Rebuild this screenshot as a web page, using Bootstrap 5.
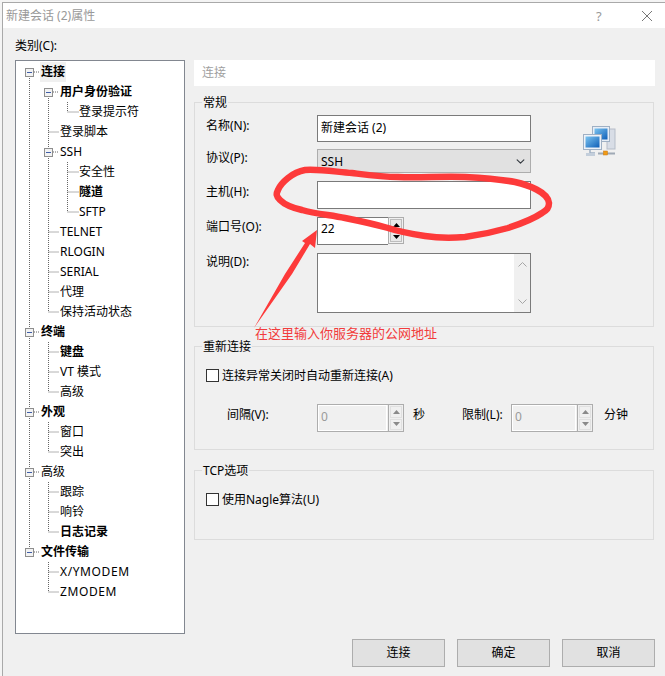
<!doctype html>
<html lang="zh"><head><meta charset="utf-8"><title>新建会话 (2)属性</title>
<link href="https://cdn.jsdelivr.net/npm/bootstrap@5.3.0/dist/css/bootstrap.min.css" rel="stylesheet">
<style>
html,body{height:676px;overflow:hidden;background:#f4f4f4}
body{font:12px/18px "Noto Sans","Noto Sans CJK SC",sans-serif;color:#000}
.wnd{position:relative;margin:2px 0 0 2px;border-top:1px solid #a9a9a9;border-left:1px solid #a9a9a9;background:#f0f0f0;height:674px}
.ttl{height:25px;background:#fff;color:#999;padding-left:3px;padding-right:12px;font-size:12px}
.ttl-q{width:45px;font-size:13px}
.cat-lbl{height:32px;padding:9px 0 0 12px}
.mainrow{padding-left:12px;padding-right:10px}
.tree{position:relative;width:170px;height:574px;margin-right:9px;background:#fff;border:1px solid #828790;padding-top:1px;flex:none}
.tree-lines{position:absolute;left:-1px;top:-1px}
.trow{height:20px;line-height:20px;white-space:nowrap}
.lv0{padding-left:25px}.lv1{padding-left:44px}.lv2{padding-left:63px}
.trow b{font-weight:700}
.wide{letter-spacing:.6px}
.sel{display:inline-block;background:#f0f0f0;padding:0 1px;margin-left:-1px}
.pagehdr{height:26px;background:#fff;color:#a0a0a0;line-height:26px;padding-left:8px;margin-bottom:16px}
.grp{position:relative;border:1px solid #dcdcdc;margin-right:1px}
.grp-lg{position:absolute;left:7px;top:-9px;padding:0 1px;background:#f0f0f0;line-height:18px}
.g1{height:225px;padding:12px 0 0 11px;margin-bottom:19px}
.g2{height:104px;padding:22px 0 0 11px;margin-bottom:20px}
.g3{height:70px;padding:22px 0 0 11px}
.fld-lbl{width:111px;flex:none}
.lb1{padding-top:1px}.lb2{padding-top:2px}
.ctl.form-control,.ctl.form-select{border-radius:0;font:inherit;color:#000;box-shadow:none;padding:0 3px;min-height:0}
.ctl.form-control{border:1px solid #7a7a7a;background:#fff}
.w214{width:214px}
.h27{height:27px;padding-bottom:4px!important}.h24{height:24px}.h28{height:28px}.h60{height:60px}
.mb7{margin-bottom:7px}.mb8{margin-bottom:8px}
.ctl.form-select{border:1px solid #adadad;background-color:#e1e1e1;background-position:right 3px center;background-size:13px 9px;padding-top:2px}
.memo{display:flex;padding:0!important;justify-content:flex-end}
.memo-bar{width:16px;background:#f0f0f0;height:100%}
.spin{width:87px;height:28px}
.spin2{width:82px}
.spin-in.form-control{flex:1 1 0;width:0;height:28px;border-right:0!important;padding-bottom:5px}
.spin-btns{width:16px;height:27px;border:1px solid #adadad;padding:1px;gap:1px;flex:none;background:#f0f0f0}
.spin-b{flex:1;background:#e8e8e8;border:1px solid #bdbdbd;display:flex;align-items:center;justify-content:center}
.dis .spin-in.form-control{border-color:#adadad!important;background:#f0f0f0!important;color:#9a9a9a!important;outline:1px solid #fff;outline-offset:-2px;padding-bottom:3px}
.dis .spin-btns{height:28px}
.dis .spin-b{border-color:#e0e0e0;background:#f0f0f0}
.dis>label,.dis>span{margin-bottom:6px}
.chk.form-check-input{width:13px;height:13px;margin:0 3px 0 0;border:1px solid #333;border-radius:0;flex:none}
.ind0{width:111px;padding-left:21px;flex:none}
.u-sec{width:58px;padding-left:9px;flex:none}
.u-lim{width:49px;flex:none}
.u-min{padding-left:11px}
.pcico{margin:11px 0 0 52px;flex:none}
.foot{margin-top:5px;padding-right:10px;gap:12px}
.wbtn.btn{width:93px;height:28px;padding:0;border:1px solid #adadad;border-radius:0;background:#e1e1e1;color:#000;font:inherit}
.ink{position:absolute;left:-3px;top:-3px;pointer-events:none}
.note{position:absolute;left:252px;top:321px;color:#f23c3c;font-size:13px;line-height:18px;white-space:nowrap}
.h13{height:13px}
.mt22{margin-top:22px}
</style></head>
<body>
<div class="wnd">
  <div class="ttl d-flex align-items-center">
    <span class="flex-grow-1">新建会话 (2)属性</span>
    <span class="ttl-q">?</span>
    <svg width="12" height="12" viewBox="0 0 12 12"><path d="M1 1l10 10M11 1L1 11" stroke="#777" fill="none"/></svg>
  </div>
  <div class="cat-lbl">类别(C):</div>
  <div class="mainrow d-flex">
    <div class="tree">
      <svg class="tree-lines" width="170" height="574" viewBox="0 0 170 574">
        <g stroke="#666" stroke-dasharray="1 1" fill="none">
          <path d="M14.500 18V488M33.500 38V88M33.500 96V252H44M52.500 42V52H64M52.500 102V152H64M33.500 72H44M52.500 112H64M52.500 132H64M33.500 172H44M33.500 192H44M33.500 212H44M33.500 232H44M33.500 282V332H44M33.500 292H44M33.500 312H44M33.500 362V392H44M33.500 372H44M33.500 422V472H44M33.500 432H44M33.500 452H44M33.500 502V532H44M33.500 512H44M19 12H25M19 272H25M19 352H25M19 412H25M19 492H25M38 32H44M38 92H44"/>
        </g>
        <g fill="#f2f2f2" stroke="#8e8e8e">
          <rect x="10.500" y="8.500" width="8" height="8"/><rect x="10.500" y="268.500" width="8" height="8"/><rect x="10.500" y="348.500" width="8" height="8"/><rect x="10.500" y="408.500" width="8" height="8"/><rect x="10.500" y="488.500" width="8" height="8"/>
          <rect x="29.500" y="28.500" width="8" height="8"/><rect x="29.500" y="88.500" width="8" height="8"/>
        </g>
        <path d="M12 12.500h5M12 272.500h5M12 352.500h5M12 412.500h5M12 492.500h5M31 32.500h5M31 92.500h5" stroke="#3f5ea8"/>
      </svg>
      <div class="trow lv0"><b class="sel">连接</b></div>
      <div class="trow lv1"><b>用户身份验证</b></div>
      <div class="trow lv2">登录提示符</div>
      <div class="trow lv1">登录脚本</div>
      <div class="trow lv1">SSH</div>
      <div class="trow lv2">安全性</div>
      <div class="trow lv2"><b>隧道</b></div>
      <div class="trow lv2">SFTP</div>
      <div class="trow lv1">TELNET</div>
      <div class="trow lv1">RLOGIN</div>
      <div class="trow lv1">SERIAL</div>
      <div class="trow lv1">代理</div>
      <div class="trow lv1">保持活动状态</div>
      <div class="trow lv0"><b>终端</b></div>
      <div class="trow lv1"><b>键盘</b></div>
      <div class="trow lv1">VT 模式</div>
      <div class="trow lv1">高级</div>
      <div class="trow lv0"><b>外观</b></div>
      <div class="trow lv1">窗口</div>
      <div class="trow lv1">突出</div>
      <div class="trow lv0">高级</div>
      <div class="trow lv1">跟踪</div>
      <div class="trow lv1">响铃</div>
      <div class="trow lv1"><b>日志记录</b></div>
      <div class="trow lv0"><b>文件传输</b></div>
      <div class="trow lv1 wide">X/YMODEM</div>
      <div class="trow lv1 wide">ZMODEM</div>
    </div>
    <div class="flex-grow-1">
      <div class="pagehdr">连接</div>
      <div class="grp g1 d-flex">
        <span class="grp-lg">常规</span>
        <div>
          <div class="d-flex align-items-start mb7"><label class="fld-lbl lb2">名称(N):</label><input class="form-control ctl w214 h27" value="新建会话 (2)"></div>
          <div class="d-flex align-items-start mb8"><label class="fld-lbl">协议(P):</label><select class="form-select ctl w214 h24"><option>SSH</option></select></div>
          <div class="d-flex align-items-start mb8"><label class="fld-lbl lb2">主机(H):</label><input class="form-control ctl w214 h28"></div>
          <div class="d-flex align-items-start mb8"><label class="fld-lbl lb1">端口号(O):</label>
            <div class="d-flex spin"><input class="form-control ctl spin-in" value="22">
              <div class="spin-btns d-flex flex-column"><div class="spin-b"><svg width="7" height="4" viewBox="0 0 7 4"><path d="M3.500 0L7 4H0z" fill="#000"/></svg></div><div class="spin-b"><svg width="7" height="4" viewBox="0 0 7 4"><path d="M0 0h7L3.500 4z" fill="#000"/></svg></div></div>
            </div>
          </div>
          <div class="d-flex align-items-start"><label class="fld-lbl">说明(D):</label>
            <div class="form-control ctl w214 h60 memo"><div class="memo-bar d-flex flex-column justify-content-between align-items-center py-2"><svg width="9" height="5" viewBox="0 0 9 5"><path d="M.5 4.500l4-4 4 4" stroke="#a6a6a6" fill="none"/></svg><svg width="9" height="5" viewBox="0 0 9 5"><path d="M.5.5l4 4 4-4" stroke="#a6a6a6" fill="none"/></svg></div></div>
          </div>
        </div>
        <svg class="pcico" width="33" height="32" viewBox="0 0 33 32">
          <defs><linearGradient id="scr" x1="0" y1="0" x2="1" y2="1"><stop offset="0" stop-color="#7cc4f0"/><stop offset="1" stop-color="#0f5fb8"/></linearGradient></defs>
          <rect x="24" y="3" width="8" height="20" fill="#d8dde6" stroke="#b5bcc8"/>
          <rect x="9.500" y="0.500" width="17" height="15" fill="#e8eef6" stroke="#9fb0c4"/>
          <rect x="11.500" y="2.500" width="13" height="11" fill="url(#scr)"/>
          <rect x="0.500" y="8.500" width="18" height="15" fill="#eef2f8" stroke="#9fb0c4"/>
          <rect x="2.500" y="10.500" width="14" height="11" fill="url(#scr)"/>
          <path d="M7 24v3h5" stroke="#9fb0c4" fill="none" stroke-width="1.500"/>
          <path d="M3 28.500h9" stroke="#c3cedb" stroke-width="3"/>
          <path d="M15 27.500H32" stroke="#9fa9b5" stroke-width="2"/>
          <rect x="20.500" y="25" width="4" height="4" fill="#f09a16" stroke="#c97a10" stroke-width=".5"/>
        </svg>
      </div>
      <div class="grp g2">
        <span class="grp-lg">重新连接</span>
        <div class="d-flex align-items-center h13"><input class="form-check-input chk" type="checkbox"><label>连接异常关闭时自动重新连接(A)</label></div>
        <div class="d-flex align-items-center dis mt22">
          <label class="ind0">间隔(V):</label>
          <div class="d-flex spin"><input class="form-control ctl spin-in" value="0" disabled>
            <div class="spin-btns d-flex flex-column"><div class="spin-b"><svg width="7" height="4" viewBox="0 0 7 4"><path d="M3.500 0L7 4H0z" fill="#8a8a8a"/></svg></div><div class="spin-b"><svg width="7" height="4" viewBox="0 0 7 4"><path d="M0 0h7L3.500 4z" fill="#8a8a8a"/></svg></div></div>
          </div>
          <span class="u-sec">秒</span>
          <label class="u-lim">限制(L):</label>
          <div class="d-flex spin spin2"><input class="form-control ctl spin-in" value="0" disabled>
            <div class="spin-btns d-flex flex-column"><div class="spin-b"><svg width="7" height="4" viewBox="0 0 7 4"><path d="M3.500 0L7 4H0z" fill="#8a8a8a"/></svg></div><div class="spin-b"><svg width="7" height="4" viewBox="0 0 7 4"><path d="M0 0h7L3.500 4z" fill="#8a8a8a"/></svg></div></div>
          </div>
          <span class="u-min">分钟</span>
        </div>
      </div>
      <div class="grp g3">
        <span class="grp-lg">TCP选项</span>
        <div class="d-flex align-items-center h13"><input class="form-check-input chk" type="checkbox"><label>使用Nagle算法(U)</label></div>
      </div>
    </div>
  </div>
  <div class="d-flex justify-content-end foot">
    <button class="btn wbtn">连接</button><button class="btn wbtn">确定</button><button class="btn wbtn">取消</button>
  </div>
  <svg class="ink" width="665" height="676" viewBox="0 0 665 676">
    <path d="M305 170C320 169 337 172 352 173C368 175 382 177 398 177C420 178 443 176 465 177C483 178 499 179 515 182C528 185 548 192 549 203C549 208 547 210 542 213C532 220 520 224 508 228C494 232 480 235 465 237C452 238 438 238 425 236C412 234 400 232 388 228C374 224 360 221 345 218C331 215 316 214 302 210C293 208 285 205 280 200C276 196 276 194 278 190C280 185 283 182 288 178C293 174 299 171 305 170Z" fill="none" stroke="#fd3a3a" stroke-width="6.500" stroke-linecap="round" stroke-linejoin="round"/>
    <path d="M317 230L315 248L310 244L292 274L254 328L285 274L305 243L302 241Z" fill="#fd3a3a"/>
  </svg>
  <div class="note">在这里输入你服务器的公网地址</div>
</div>
</body></html>
